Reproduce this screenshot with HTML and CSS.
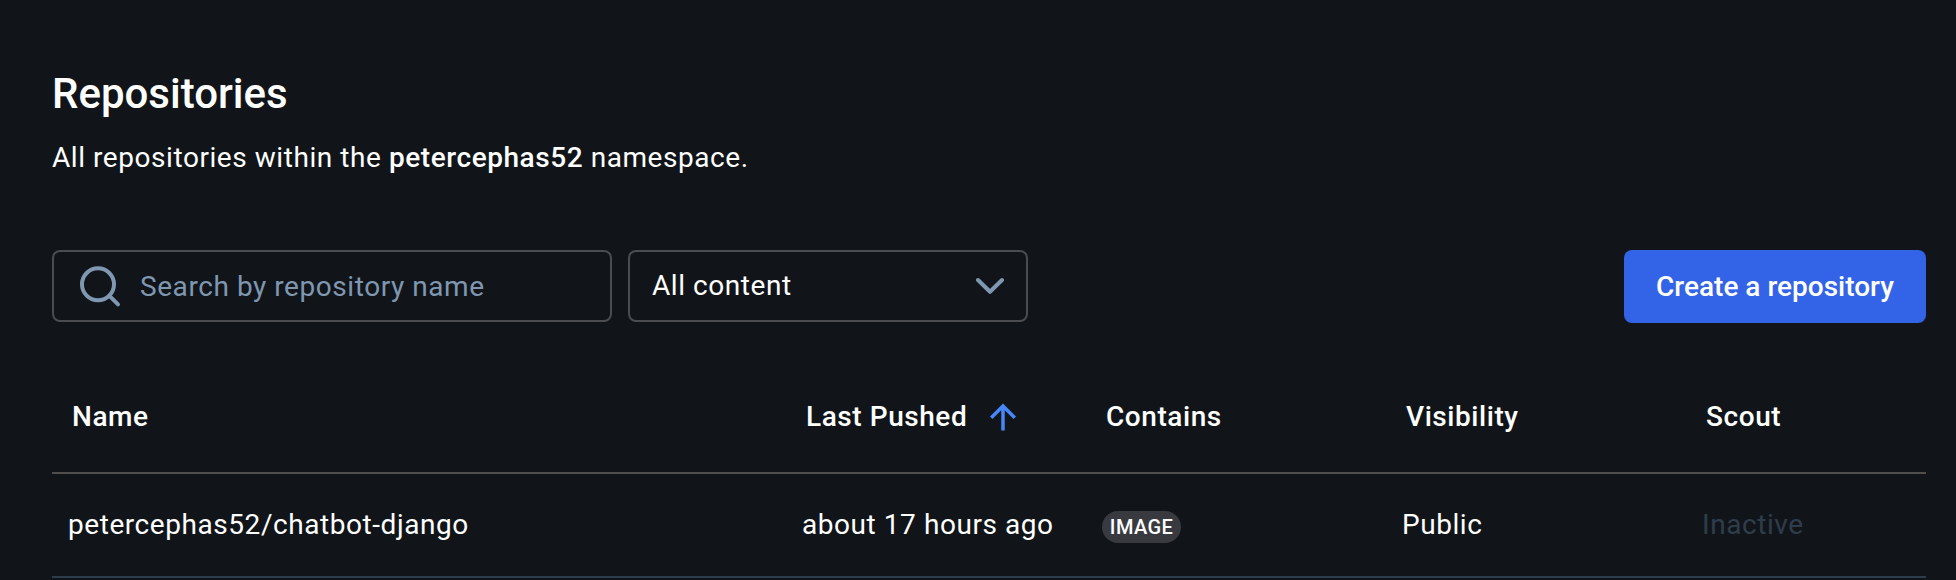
FILE: index.html
```html
<!DOCTYPE html>
<html lang="en">
<head>
<meta charset="utf-8">
<title>Repositories</title>
<link rel="stylesheet" href="styles.css">
</head>
<body>
<main class="page">
  <h1 class="title">Repositories</h1>
  <p class="subtitle">All repositories within the <strong>petercephas52</strong> namespace.</p>

  <div class="toolbar">
    <label class="search">
      <svg class="search-icon" width="44" height="44" viewBox="0 0 44 44" fill="none" stroke="currentColor" stroke-width="4">
        <circle cx="20" cy="19.3" r="16"/>
        <path d="M31.2 30.6 40 39.4" stroke-linecap="round"/>
      </svg>
      <span>Search by repository name</span>
    </label>
    <div class="select">
      <span>All content</span>
      <svg class="chevron" width="28" height="18" viewBox="0 0 28 18" fill="none" stroke="currentColor" stroke-width="4" stroke-linecap="round" stroke-linejoin="round">
        <path d="M2 3 14 14.8 26 3"/>
      </svg>
    </div>
    <button class="create" type="button">Create a repository</button>
  </div>

  <div class="table">
    <div class="row head">
      <div>Name</div>
      <div class="sorted">Last Pushed
        <svg width="26" height="28" viewBox="0 0 26 28" fill="none" stroke="currentColor" stroke-width="3.5">
          <path d="M13 27.5V3M1.2 14.8 13 3l11.8 11.8"/>
        </svg>
      </div>
      <div>Contains</div>
      <div>Visibility</div>
      <div>Scout</div>
    </div>
    <div class="row item">
      <div>petercephas52/chatbot-django</div>
      <div>about 17 hours ago</div>
      <div><span class="chip">IMAGE</span></div>
      <div>Public</div>
      <div class="inactive">Inactive</div>
    </div>
  </div>
</main>
</body>
</html>
```
FILE: styles.css
```css
* { box-sizing: border-box; }

body {
  margin: 0;
  height: 580px;
  overflow: hidden;
  background: #111519;
  color: #fff;
  font: 400 28px/42px Roboto, sans-serif;
  letter-spacing: 0.56px;
}

.page { padding: 68px 30px 0 52px; }

.title {
  margin: 0;
  font-size: 42px;
  line-height: 52px;
  font-weight: 500;
  letter-spacing: 0;
}

.subtitle { margin: 17px 0 0; }
.subtitle strong { font-weight: 500; }

.toolbar {
  display: flex;
  align-items: flex-start;
  gap: 16px;
  margin-top: 71px;
}

.search,
.select {
  display: flex;
  align-items: center;
  height: 72px;
  border: 2px solid #4b4c50;
  border-radius: 8px;
}

.search {
  width: 560px;
  padding: 1px 0 0 24px;
  gap: 18px;
  color: #7f97b1;
}

.select {
  width: 400px;
  padding: 0 22px;
  justify-content: space-between;
}

.chevron { color: #7f97b1; }

.create {
  width: 302px;
  height: 73px;
  margin-left: auto;
  padding: 0;
  border: 0;
  border-radius: 8px;
  background: #3364e7;
  color: #fff;
  font: 500 28px/42px Roboto, sans-serif;
  letter-spacing: 0;
}

.table { margin-top: 29px; }

.row {
  display: grid;
  grid-template-columns: 734px 300px 300px 300px 240px;
  align-items: center;
}

.head {
  height: 122px;
  padding: 10px 0 0 20px;
  border-bottom: 2px solid #4f4e4d;
  font-weight: 500;
}

.item {
  height: 104px;
  padding-left: 16px;
  border-bottom: 2px solid #2e3d4b;
}

.sorted {
  display: flex;
  align-items: center;
  gap: 23px;
}
.sorted svg { color: #4787f7; }

.chip {
  display: block;
  width: 79px;
  height: 32px;
  margin-top: 4px;
  border-radius: 16px;
  background: #393a3f;
  font-size: 20px;
  line-height: 33px;
  font-weight: 500;
  letter-spacing: 0.4px;
  text-align: center;
}

.inactive { color: #2e3d4b; }
```
